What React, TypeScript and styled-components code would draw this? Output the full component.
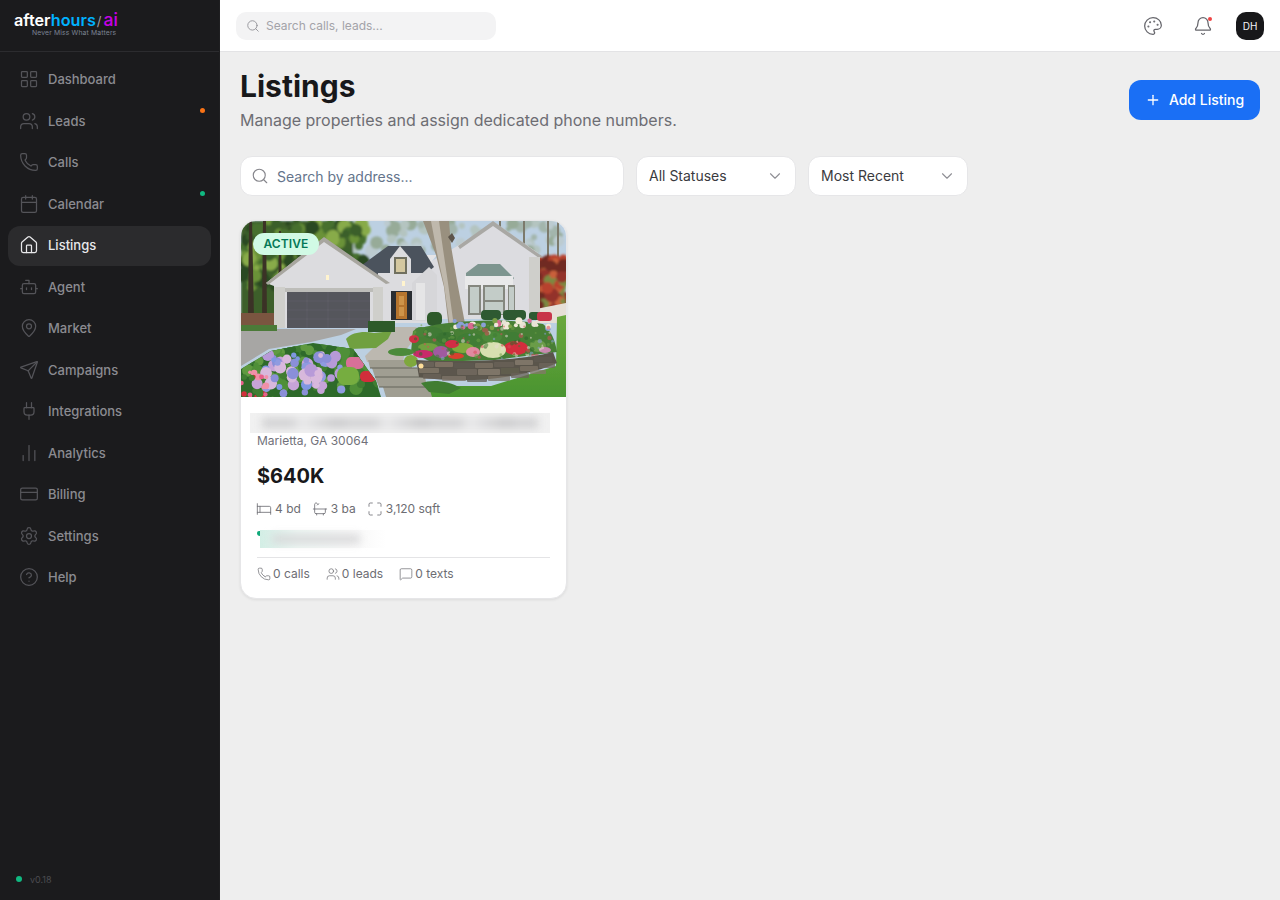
import styled, { createGlobalStyle } from "styled-components";
import {
  LayoutGrid, Users, Phone, Calendar, House, Bot, MapPin, Send, Plug, ChartNoAxesColumn,
  CreditCard, Settings, CircleHelp, Search, Palette, Bell, Plus, ChevronDown, Bed, Bath,
  Maximize, MessageSquare,
} from "lucide-react";

const GlobalStyle = createGlobalStyle`
  html, body { margin: 0; height: 100%; }
  body { font-family: Inter, "Liberation Sans", sans-serif; background: #eeeeee; }
  * { box-sizing: border-box; }
`;

const Shell = styled.div`
  display: flex;
  width: 100%;
  height: 900px;
  overflow: hidden;
`;

const Sidebar = styled.aside`
  width: 220px;
  flex-shrink: 0;
  background: #1b1b1d;
  display: flex;
  flex-direction: column;
  border-right: 1px solid #1f1f21;
`;

const Brand = styled.div`
  height: 52px;
  padding: 12px 0 0 14px;
  border-bottom: 1px solid #2c2c2f;
`;

const Logo = styled.div`
  font-size: 16.2px;
  font-weight: 600;
  line-height: 16px;
  color: #fff;
  span:nth-child(1) { color: #00b2ff; }
  span:nth-child(2) { color: #a0a0a6; font-size: 13px; font-weight: 400; margin: 0 2px 0 1px; }
  span:nth-child(3) { color: #c800e8; font-size: 17.5px; font-weight: 500; line-height: 0; }
`;

const Tagline = styled.div`
  font-size: 6.8px;
  line-height: 7px;
  margin-left: 18px;
  color: #7b8494;
  letter-spacing: 0.15px;
  white-space: nowrap;
`;

const Nav = styled.nav`
  flex: 1;
  display: flex;
  flex-direction: column;
  gap: 1.5px;
  padding: 7.5px 8px 0;
`;

const NavItem = styled.div<{ $active?: boolean }>`
  position: relative;
  height: 40px;
  display: flex;
  align-items: center;
  gap: 9px;
  padding: 0 11px 1px;
  border-radius: 12px;
  font-size: 13px;
  font-weight: 500;
  background: ${(p) => (p.$active ? "#2b2b2d" : "transparent")};
  color: ${(p) => (p.$active ? "#e8e8ea" : "#8b8b91")};
  svg { color: ${(p) => (p.$active ? "#e8e8ea" : "#545459")}; flex-shrink: 0; }
`;

const NavDot = styled.i<{ $color: string }>`
  position: absolute;
  top: 7px;
  right: 6px;
  width: 5px;
  height: 5px;
  border-radius: 50%;
  background: ${(p) => p.$color};
`;

const Version = styled.div`
  display: flex;
  align-items: center;
  gap: 8px;
  padding: 0 0 14px 16px;
  font-size: 9px;
  line-height: 12px;
  color: #4c4c51;
  i { width: 6px; height: 6px; margin-top: -3px; border-radius: 50%; background: #10b981; }
`;

const Column = styled.div`
  flex: 1;
  min-width: 0;
  display: flex;
  flex-direction: column;
`;

const Topbar = styled.header`
  height: 52px;
  flex-shrink: 0;
  background: #fff;
  border-bottom: 1px solid #e3e3e5;
  display: flex;
  align-items: center;
  justify-content: space-between;
  padding: 0 16px;
`;

const TopSearch = styled.div`
  width: 260px;
  height: 28px;
  border-radius: 10px;
  background: #f3f3f4;
  display: flex;
  align-items: center;
  gap: 6px;
  padding: 0 10px;
  font-size: 12px;
  color: #a3a3a9;
  svg { color: #8f8f95; }
`;

const TopActions = styled.div`
  display: flex;
  align-items: center;
  color: #65656b;
`;

const BellWrap = styled.div`
  position: relative;
  display: flex;
  margin: 0 23px 0 30px;
  &::after {
    content: "";
    position: absolute;
    top: 1px;
    right: 1px;
    width: 4px;
    height: 4px;
    border-radius: 50%;
    background: #ef4444;
  }
`;

const Avatar = styled.div`
  width: 28px;
  height: 28px;
  border-radius: 10px;
  background: #18181a;
  color: #f4f4f5;
  font-size: 10px;
  font-weight: 400;
  display: flex;
  align-items: center;
  justify-content: center;
`;

const Main = styled.main`
  flex: 1;
  padding: 16px 20px;
  background: #eeeeee;
`;

const PageHead = styled.div`
  display: flex;
  justify-content: space-between;
  align-items: center;
  margin-bottom: 24px;
`;

const Title = styled.h1`
  margin: 0;
  font-size: 30px;
  line-height: 36px;
  font-weight: 700;
  color: #18181a;
`;

const Subtitle = styled.p`
  margin: 4px 0 0;
  font-size: 16px;
  line-height: 24px;
  color: #6d6d73;
`;

const AddButton = styled.button`
  width: 131px;
  height: 40px;
  padding: 0 0 2px;
  border: 0;
  border-radius: 12px;
  background: #1a6ff5;
  color: #fff;
  font: 500 14px Inter, sans-serif;
  display: flex;
  align-items: center;
  justify-content: center;
  gap: 8px;
  svg { margin-top: 2px; }
`;

const Filters = styled.div`
  display: flex;
  gap: 12px;
  margin-bottom: 24px;
`;

const SearchBox = styled.div`
  width: 384px;
  height: 40px;
  padding: 0 10px;
  border-radius: 12px;
  border: 1px solid #e6e6e8;
  background: #fff;
  display: flex;
  align-items: center;
  gap: 8px;
  font-size: 14px;
  color: #64748b;
  svg { color: #85858b; }
`;

const Select = styled.div`
  width: 160px;
  height: 40px;
  padding: 0 11px 2px 12px;
  border-radius: 12px;
  border: 1px solid #e6e6e8;
  background: #fff;
  display: flex;
  align-items: center;
  justify-content: space-between;
  font-size: 14px;
  color: #3a3a3e;
  svg { color: #8f8f95; margin-top: 2px; }
`;

const Card = styled.article`
  width: 327px;
  height: 379px;
  border-radius: 16px;
  border: 1px solid #e6e6e8;
  background: #fff;
  box-shadow: 0 1px 3px rgba(0, 0, 0, 0.08);
  overflow: hidden;
`;

const PhotoWrap = styled.div`
  position: relative;
  height: 176px;
  overflow: hidden;
  svg { display: block; }
`;

const Badge = styled.span`
  position: absolute;
  top: 12px;
  left: 12px;
  height: 22px;
  padding: 0 10.5px;
  border-radius: 11px;
  background: #d1fae5;
  color: #047857;
  font-size: 12px;
  font-weight: 600;
  letter-spacing: 0.1px;
  line-height: 22px;
`;

const CardBody = styled.div`
  padding: 16px 16px 0;
`;

const BlurredAddress = styled.div`
  position: relative;
  height: 20px;
  margin: 0 0 0 -7px;
  width: 300px;
  overflow: hidden;
  background: #f1f1f1;
`;

const BlurredLine = styled.div`
  position: absolute;
  inset: 5px 12px;
  background: repeating-linear-gradient(90deg, #d0d0d2 0 30px, #e6e6e7 38px 42px, #c8c8ca 72px 84px);
  filter: blur(4px);
`;

const City = styled.div`
  font-size: 12px;
  line-height: 15px;
  color: #71717a;
`;

const Price = styled.div`
  margin-top: 14px;
  font-size: 20px;
  line-height: 28px;
  font-weight: 700;
  color: #18181a;
`;

const Specs = styled.div`
  display: flex;
  gap: 12px;
  margin-top: 10px;
  font-size: 12px;
  line-height: 18px;
  color: #6d6d73;
`;

const Spec = styled.span`
  display: flex;
  align-items: center;
  gap: 3px;
  svg { color: #6d6d73; margin-left: -1px; }
`;

const BlurredPhone = styled.div`
  position: relative;
  width: 126px;
  height: 18px;
  margin: 12px 0 0 3px;
  background: linear-gradient(90deg, #d3eee5 0, #edf6f3 30%, #f7f7f7 70%, #fff 100%);
  &::before {
    content: "";
    position: absolute;
    left: -3px;
    top: 1px;
    width: 3px;
    height: 5px;
    border-radius: 2px 0 0 3px;
    background: #10a97a;
  }
  &::after {
    content: "";
    position: absolute;
    inset: 5px 26px 5px 12px;
    background: #d6d6d8;
    filter: blur(4px);
  }
`;

const CardFooter = styled.div`
  display: flex;
  gap: 16px;
  margin-top: 9px;
  padding-top: 8px;
  border-top: 1px solid #e4e4e6;
  font-size: 12px;
  line-height: 16px;
  color: #6d6d73;
`;

const Stat = styled.span`
  display: flex;
  align-items: center;
  gap: 2px;
`;

const navItems = [
  { label: "Dashboard", icon: LayoutGrid },
  { label: "Leads", icon: Users, dot: "#f97316" },
  { label: "Calls", icon: Phone },
  { label: "Calendar", icon: Calendar, dot: "#10b981" },
  { label: "Listings", icon: House, active: true },
  { label: "Agent", icon: Bot },
  { label: "Market", icon: MapPin },
  { label: "Campaigns", icon: Send },
  { label: "Integrations", icon: Plug },
  { label: "Analytics", icon: ChartNoAxesColumn },
  { label: "Billing", icon: CreditCard },
  { label: "Settings", icon: Settings },
  { label: "Help", icon: CircleHelp },
];

// small seeded generator so the planting in the photo is the same on every load
const scatter = (seed: number, count: number, x: number, y: number, w: number, h: number, colors: string[]) => {
  let s = seed;
  const next = () => {
    s = (s * 16807) % 2147483647;
    return (s % 1000) / 1000;
  };
  return Array.from({ length: count }, () => ({
    cx: x + next() * w,
    cy: y + next() * h,
    r: 1 + next() * 2,
    fill: colors[Math.floor(next() * colors.length)],
  }));
};

const Blobs = ({ items, scale = 1 }: { items: ReturnType<typeof scatter>; scale?: number }) => (
  <>
    {items.map((b, i) => (
      <circle key={i} cx={b.cx} cy={b.cy} r={b.r * scale} fill={b.fill} />
    ))}
  </>
);

const hydrangeas = scatter(7, 60, 14, 132, 92, 42, ["#8f9be0", "#b79ad8", "#7f97e2", "#c7a4d8", "#8a8fd8", "#d8b8dc"]);
const leftLeaves = scatter(11, 110, 0, 122, 140, 54, ["#3f7d32", "#4f8f38", "#2f6a2c", "#5f9a40"]);
const pinkLeft = scatter(37, 18, 0, 150, 26, 26, ["#e6608a", "#d12f3a", "#3f7d32", "#f090a8"]);
const canopy = scatter(41, 190, 0, 0, 125, 66, ["#46702f", "#6a9238", "#3a5f2a", "#88ab48", "#2c4a24"]);
const canopyBack = scatter(43, 70, 112, 0, 213, 30, ["#a3b5ac", "#b4c4c0", "#97ab98", "#bccbd0"]);
const redTree = scatter(47, 80, 296, 38, 29, 48, ["#b8432e", "#93322a", "#c9603a", "#6f2a24", "#7a8a42"]);
const bedSpeck = scatter(53, 120, 172, 104, 140, 34, ["#2f6629", "#6f9f45", "#d84a5a", "#e8dcd0", "#8aa0d8", "#3f7d35"]);
const backRow = scatter(31, 34, 212, 99, 100, 8, ["#e8e2d6", "#8aa0d8", "#d86a90", "#f0ead8", "#7da24a"]);

// bed planting: cx, cy, rx, ry, fill
const bedPlants: [number, number, number, number, string][] = [
  [180, 111, 7, 5, "#4a8238"], [192, 112, 10, 6, "#3f7a35"], [205, 117, 10, 6, "#3a7432"],
  [229, 119, 13, 7, "#3f7d35"], [251, 116, 10, 5.5, "#4c8a3a"], [272, 116, 8, 5, "#3f7d35"],
  [222, 127, 11, 5, "#7faa3c"], [187, 126, 10, 4, "#6f9f3f"], [297, 125, 8, 6, "#6b9c48"],
  [160, 131, 13, 4, "#4c8a3a"], [173, 118, 5, 4, "#d12f45"], [211, 123, 7, 4, "#d12f45"],
  [275, 127, 12, 7, "#d32f3c"], [182, 133, 10, 4, "#c92a6a"], [200, 131, 8, 6, "#a05aa0"],
  [215, 135, 8, 3, "#d8402f"], [232, 131, 7, 5, "#e08aa0"], [252, 129, 13, 8, "#d8e0b0"],
  [304, 129, 6, 3, "#c88ab0"], [170, 140, 7, 6, "#7ea83c"],
];

// retaining wall stones: x, y, w, h, fill
const stones: [number, number, number, number, string][] = [
  [177, 141, 16, 5, "#6f675c"], [194, 141, 18, 5, "#86796a"], [213, 142, 20, 5, "#5f5a52"],
  [234, 142, 18, 5, "#7d7466"], [253, 141, 20, 5, "#6a6258"], [274, 139, 18, 5, "#8a7f70"],
  [293, 136, 18, 5, "#5f5a52"], [178, 147, 20, 5, "#84786a"], [199, 148, 16, 6, "#5c574f"],
  [216, 148, 20, 6, "#756c60"], [237, 148, 22, 6, "#8a8072"], [260, 147, 18, 6, "#64604f"],
  [279, 145, 18, 5, "#7d7466"], [298, 142, 16, 5, "#6f675c"], [182, 153, 18, 5, "#6a6258"],
  [201, 155, 24, 5, "#80766a"], [226, 155, 20, 6, "#5f5a52"], [247, 155, 22, 5, "#7d7466"],
  [270, 152, 18, 5, "#6a6258"], [289, 149, 16, 4, "#84786a"],
];

const HousePhoto = () => (
  <svg width="325" height="176" viewBox="0 0 325 176" role="img" aria-label="House with a flower garden">
    <defs>
      <filter id="soft" x="-5%" y="-5%" width="110%" height="110%">
        <feGaussianBlur stdDeviation="0.6" />
      </filter>
      <filter id="softer" x="-5%" y="-5%" width="110%" height="110%">
        <feGaussianBlur stdDeviation="1.3" />
      </filter>
      <linearGradient id="lawn" x1="0" y1="0" x2="0" y2="1">
        <stop offset="0" stopColor="#6aa83c" />
        <stop offset="1" stopColor="#4a9430" />
      </linearGradient>
      <clipPath id="frontBed">
        <path d="M0 148L30 130 72 122 112 128 135 160 140 176H0z" />
      </clipPath>
    </defs>
    <g filter="url(#soft)">
      <rect width="325" height="176" fill="#bcd0e2" />
      <g filter="url(#softer)">
        <Blobs items={canopyBack} scale={2.4} />
        <rect width="112" height="100" fill="#3d5e2c" />
        <Blobs items={canopy} scale={2.6} />
      </g>
      <path d="M8 0h3l2 96H7zM22 0h3l1 96h-5zM38 10h2l1 80h-4zM60 30h2v60h-3zM84 40h2v20h-3z" fill="#3b3327" />
      <path d="M258 0h2v24h-2zM282 0h2v32h-2zM306 0h2v40h-2zM316 0h2v40h-2z" fill="#7c7a6c" />
      <g filter="url(#softer)">
        <Blobs items={redTree} scale={2.6} />
      </g>
      <path d="M295 88l30-6v20h-30z" fill="#e6dfd6" />
      <path d="M0 92h33v14H0z" fill="#7a5540" />

      {/* right wing */}
      <path d="M184 44l34-20 35-23 44 31v66H184z" fill="#dcdce0" />
      <path d="M217 25l35-25 50 36-4 1-46-32-33 23z" fill="#a9a8a4" />
      <path d="M288 36h11v62h-11z" fill="#cfcfcb" />
      <path d="M176 34h20l-14 17h-14z" fill="#e4e4e6" />
      {/* bay window */}
      <path d="M225 52l12-9h22l14 14-2 3h-46z" fill="#7d958f" />
      <path d="M224 55h48v13h-48z" fill="#e9e9ea" />
      <path d="M227 64h13v30h-13zM242 64h22v30h-22zM267 64h7v30h-7z" fill="#85877f" />
      <path d="M229 66h9v26h-9zM244 66h18v13h-18zM244 81h18v12h-18zM268 66h5v26h-5z" fill="#c3ccc8" />

      {/* center section */}
      <path d="M117 47l30-22h33l13 21-10 8h-56z" fill="#4c535d" />
      <path d="M137 52h50v50h-50z" fill="#dcdcdf" />
      <path d="M149 38l10-13 11 13v17h-21z" fill="#dcdcde" />
      <path d="M153 36h13v17h-13z" fill="#6f705e" />
      <path d="M155 38h9v13h-9z" fill="#d4c8a0" />
      <path d="M150 70h21v29h-21z" fill="#2c2d30" />
      <path d="M155 71h11v27h-11z" fill="#b5752e" />
      <path d="M158 75h5v9h-5zM158 86h5v9h-5z" fill="#cd9449" />
      <path d="M171 62l17-16 8 8v46h-25z" fill="#d6d6d9" />
      <path d="M175 62h9v37h-9z" fill="#e5e5e6" />

      {/* garage gable */}
      <path d="M25 62l58-45 64 45-5 3v42H33V65z" fill="#dcdcdf" />
      <path d="M25 62l58-46 66 46-4 1-62-42-56 43z" fill="#a8a69f" />
      <path d="M33 66h11v41H33zM132 66h10v41h-10z" fill="#cfcfcb" />
      <path d="M44 67h88v4H44z" fill="#bdbdb9" />
      <path d="M46 71h83v36H46z" fill="#55565c" />
      <path d="M46 80h83M46 89h83M46 98h83M66 71v36M87 71v36M108 71v36" stroke="#66676d" strokeWidth="0.5" />
      <rect x="85" y="54" width="3" height="5" fill="#fff4cf" />
      <rect x="161" y="60" width="3" height="5" fill="#fff4cf" />

      {/* trunk */}
      <path d="M182 0h26l2 25 6 35 9 48h-17l-5-42-8-32z" fill="#99907f" />
      <path d="M190 0h8l4 28 5 34 6 44h-4l-6-42-7-32z" fill="#bfb8ac" />
      <path d="M207 16l4-4 3 5-3 5z" fill="#5d554b" />

      {/* ground: driveway, lawn, walkway */}
      <path d="M0 108h115l-15 6-30 7-42 7-28 17-0 3z" fill="#a7a6a4" />
      <path d="M0 104h36v6H0z" fill="#4b7a38" />
      <path d="M170 176l20-11 60 0 65-20 1-49 9-2v82z" fill="url(#lawn)" />
      <path d="M152 106h24l-4 14-8 10-2 11-36 0-2-6 10-10 14-10z" fill="#bcb8b0" />
      <path d="M127 139h43l1 8h-42zM131 147h46l3 9h-46zM134 156h50l2 10h-48zM142 166h46l3 10h-46z" fill="#a09e92" />
      <path d="M129 147h47M134 156h50M138 166h48" stroke="#64645a" strokeWidth="1.2" />

      {/* hedges by the door and back of the bed */}
      <path d="M105 118c6-7 18-8 28-6l18-2-4 8-12 9-26 1z" fill="#6fa040" />
      <path d="M127 100h27v11h-27z" fill="#2f5a2a" />
      <rect x="186" y="91" width="15" height="14" rx="5" fill="#2f5a2c" />
      <rect x="240" y="89" width="20" height="10" rx="4" fill="#2d5a30" />
      <rect x="262" y="89" width="23" height="10" rx="4" fill="#2d5a30" />
      <rect x="288" y="91" width="11" height="8" rx="3" fill="#2d5a30" />
      <rect x="296" y="91" width="15" height="9" rx="3" fill="#c8344a" />

      {/* raised bed and wall */}
      <path d="M172 110c20-10 90-14 130-7 8 6 12 16 14 28l-62 8-64 2-20-10z" fill="#477f36" />
      <Blobs items={backRow} scale={1.2} />
      {bedPlants.map(([cx, cy, rx, ry, fill], i) => (
        <ellipse key={i} cx={cx} cy={cy} rx={rx} ry={ry} fill={fill} />
      ))}
      <g opacity="0.55">
        <Blobs items={bedSpeck} scale={0.8} />
      </g>
      <path d="M175 139c40 2 100 2 137-8l4 11c-30 14-88 22-138 14z" fill="#5a554c" />
      <g opacity="0.75">
        {stones.map(([x, y, width, height, fill], i) => (
          <rect key={i} x={x} y={y} width={width} height={height} rx="1" fill={fill} />
        ))}
      </g>
      <circle cx="180" cy="145" r="2.5" fill="#ffdf9a" />
      <path d="M180 162c12-4 28-2 40 5l-12 6-20-2z" fill="#3f7d32" />

      {/* front left planting */}
      <g clipPath="url(#frontBed)">
        <rect y="118" width="145" height="58" fill="#2f6a2c" />
        <Blobs items={leftLeaves} scale={2.6} />
        <Blobs items={hydrangeas} scale={2.2} />
        <Blobs items={pinkLeft} scale={1.4} />
        <rect x="119" y="150" width="16" height="11" rx="5" fill="#d12f3a" />
        <rect x="105" y="136" width="18" height="12" rx="5" fill="#d87098" />
        <rect x="96" y="146" width="22" height="18" rx="8" fill="#76ad40" />
      </g>
    </g>
  </svg>
);

const App = () => {
  return (
    <>
      <GlobalStyle />
      <Shell>
        <Sidebar>
          <Brand>
            <Logo>
              after<span>hours</span><span>/</span><span>ai</span>
            </Logo>
            <Tagline>Never Miss What Matters</Tagline>
          </Brand>
          <Nav>
            {navItems.map(({ label, icon: Icon, dot, active }) => (
              <NavItem key={label} $active={active}>
                <Icon size={20} strokeWidth={1.5} />
                {label}
                {dot && <NavDot $color={dot} />}
              </NavItem>
            ))}
          </Nav>
          <Version>
            <i />
            v0.18
          </Version>
        </Sidebar>
        <Column>
          <Topbar>
            <TopSearch>
              <Search size={14} strokeWidth={1.5} />
              Search calls, leads...
            </TopSearch>
            <TopActions>
              <Palette size={20} strokeWidth={1.5} />
              <BellWrap>
                <Bell size={20} strokeWidth={1.5} />
              </BellWrap>
              <Avatar>DH</Avatar>
            </TopActions>
          </Topbar>
          <Main>
            <PageHead>
              <div>
                <Title>Listings</Title>
                <Subtitle>Manage properties and assign dedicated phone numbers.</Subtitle>
              </div>
              <AddButton>
                <Plus size={16} strokeWidth={2} />
                Add Listing
              </AddButton>
            </PageHead>
            <Filters>
              <SearchBox>
                <Search size={18} strokeWidth={1.5} />
                Search by address...
              </SearchBox>
              <Select>
                All Statuses
                <ChevronDown size={18} strokeWidth={1.5} />
              </Select>
              <Select>
                Most Recent
                <ChevronDown size={18} strokeWidth={1.5} />
              </Select>
            </Filters>
            <Card>
              <PhotoWrap>
                <HousePhoto />
                <Badge>ACTIVE</Badge>
              </PhotoWrap>
              <CardBody>
                <BlurredAddress>
                  <BlurredLine />
                </BlurredAddress>
                <City>Marietta, GA 30064</City>
                <Price>$640K</Price>
                <Specs>
                  <Spec><Bed size={16} strokeWidth={1.25} />4 bd</Spec>
                  <Spec><Bath size={16} strokeWidth={1.25} />3 ba</Spec>
                  <Spec><Maximize size={16} strokeWidth={1.25} />3,120 sqft</Spec>
                </Specs>
                <BlurredPhone />
                <CardFooter>
                  <Stat><Phone size={14} strokeWidth={1.25} />0 calls</Stat>
                  <Stat><Users size={14} strokeWidth={1.25} />0 leads</Stat>
                  <Stat><MessageSquare size={14} strokeWidth={1.25} />0 texts</Stat>
                </CardFooter>
              </CardBody>
            </Card>
          </Main>
        </Column>
      </Shell>
    </>
  );
};

export default App;
